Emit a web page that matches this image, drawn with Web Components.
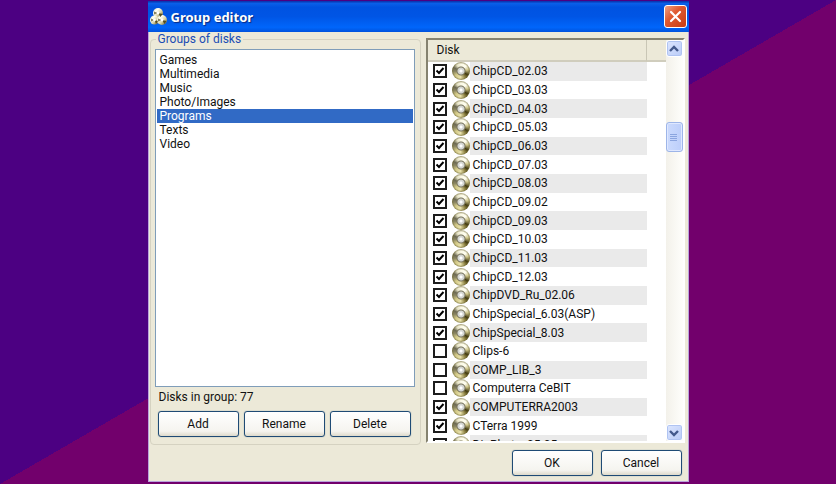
<!DOCTYPE html>
<html lang="en">
<head>
<meta charset="utf-8">
<meta name="viewport" content="width=device-width, initial-scale=1">
<title>Group editor</title>
<style>
    * {
        box-sizing: border-box;
    }

    body {
        margin: 0;
        height: 100vh;
        padding: 1px 0 2px;
        display: flex;
        justify-content: center;
        background: linear-gradient(to bottom right, #4c0082 50%, #72006c 50%);
        font: 12px/14px Roboto, "Liberation Sans", sans-serif;
        color: #111;
    }
</style>
</head>
<body>
<xp-window caption="Group editor">
    <group-box caption="Groups of disks">
        <group-list></group-list>
        <xp-button slot="actions">Add</xp-button>
        <xp-button slot="actions">Rename</xp-button>
        <xp-button slot="actions">Delete</xp-button>
    </group-box>
    <disk-list></disk-list>
    <xp-button slot="footer">OK</xp-button>
    <xp-button slot="footer">Cancel</xp-button>
</xp-window>

<script>
const groups = ["Games", "Multimedia", "Music", "Photo/Images", "Programs", "Texts", "Video"];

const disks = [
    ["ChipCD_02.03", true],
    ["ChipCD_03.03", true],
    ["ChipCD_04.03", true],
    ["ChipCD_05.03", true],
    ["ChipCD_06.03", true],
    ["ChipCD_07.03", true],
    ["ChipCD_08.03", true],
    ["ChipCD_09.02", true],
    ["ChipCD_09.03", true],
    ["ChipCD_10.03", true],
    ["ChipCD_11.03", true],
    ["ChipCD_12.03", true],
    ["ChipDVD_Ru_02.06", true],
    ["ChipSpecial_6.03(ASP)", true],
    ["ChipSpecial_8.03", true],
    ["Clips-6", false],
    ["COMP_LIB_3", false],
    ["Computerra CeBIT", false],
    ["COMPUTERRA2003", true],
    ["CTerra 1999", true],
    ["DigPhoto_05.05", false]
];

class DiskIcon extends HTMLElement {
    constructor() {
        super();
        this.attachShadow({mode: "open"}).innerHTML = `
            <style>
                :host {
                    display: block;
                    width: 18px;
                    height: 18px;
                    border-radius: 50%;
                    /* hole, hub ring, then the shine on the disc */
                    background:
                        radial-gradient(circle, #fff 0 1px, #d4d6d2 2px 3px, #77735c 4px, transparent 5px),
                        radial-gradient(circle, transparent 7px, #6c642fb0 9px),
                        conic-gradient(#fbf9e6, #fffef0 45deg, #cfc68a 80deg, #40390f 120deg, #8c8142 145deg, #e9e2ac 185deg, #d3c987 230deg, #8c8762 265deg, #6c6952 295deg, #e4e1c4 325deg, #fbf9e6);
                }
            </style>
        `;
    }
}

class XpButton extends HTMLElement {
    constructor() {
        super();
        this.attachShadow({mode: "open"}).innerHTML = `
            <style>
                :host { display: block; width: 81px; }
                button {
                    display: block;
                    width: 100%;
                    height: 26px;
                    padding: 0;
                    border: 1px solid #1f4b75;
                    border-radius: 3px;
                    background: linear-gradient(#fff, #f5f4ef 80%, #dedacb);
                    box-shadow: 0 0 1px #5f7c95;
                    font: inherit;
                    color: inherit;
                }
            </style>
            <button type="button"><slot></slot></button>
        `;
    }
}

class XpWindow extends HTMLElement {
    constructor() {
        super();
        this.attachShadow({mode: "open"});
    }

    connectedCallback() {
        this.shadowRoot.innerHTML = `
            <style>
                * { box-sizing: border-box; }
                :host {
                    box-sizing: border-box;
                    display: flex;
                    flex-direction: column;
                    width: 100%;
                    max-width: 541px;
                    border: 1px solid #b9a3dc;
                    border-top: 0;
                    background: #ece9d8;
                }
                header {
                    display: flex;
                    flex: none;
                    align-items: center;
                    gap: 4px;
                    height: 31px;
                    margin: 0 -1px;
                    padding: 0 2px;
                    background: linear-gradient(#0a2fa8, #0a5fe8 8%, #0053e1 20%, #0055e5 50%, #0066fb 85%, #0052dd);
                }
                header svg { display: block; flex: none; }
                h1 {
                    flex: 1;
                    margin: 0;
                    font: bold 13px/18px "Noto Sans", "Open Sans", sans-serif;
                    color: #fff;
                    text-shadow: 1px 1px 1px #0a2a80;
                }
                .close {
                    width: 23px;
                    height: 23px;
                    padding: 0;
                    border: 1px solid #fff;
                    border-radius: 3px;
                    background: linear-gradient(135deg, #f0a083, #e05a31 40%, #c93c12);
                }
                .close svg { margin: auto; }
                main {
                    flex: 1;
                    min-height: 0;
                    display: grid;
                    grid-template-columns: 271fr 259fr;
                    gap: 5px;
                    padding: 0 3px 0 1px;
                }
                footer {
                    flex: none;
                    display: flex;
                    justify-content: flex-end;
                    gap: 8px;
                    padding: 5px 6px 5px;
                }
            </style>
            <header>
                <svg width="17" height="18" viewBox="0 0 17 18" aria-hidden="true">
                    <defs>
                        <linearGradient id="shine" x1="0" y1="0" x2="1" y2="1">
                            <stop offset="0" stop-color="#d9d6bd"/>
                            <stop offset=".3" stop-color="#fffff4"/>
                            <stop offset=".6" stop-color="#d6cfa0"/>
                            <stop offset="1" stop-color="#4f481d"/>
                        </linearGradient>
                    </defs>
                    <g fill="url(#shine)">
                        <circle cx="8" cy="5" r="5"/>
                        <circle cx="4.500" cy="12" r="4.500"/>
                        <circle cx="12" cy="12" r="5"/>
                    </g>
                    <path d="M8 5L4 3.500v3zM4.500 12L1 10.500v3zM12 12l-4-1.500v3z" fill="#85805c"/>
                    <path d="M8 5l4.500 1-2 3zM4.500 12l3.500 1-2 3zM12 12l4.500 1-2 3z" fill="#544d21"/>
                    <g fill="#fff">
                        <circle cx="8" cy="5" r="1.400"/>
                        <circle cx="4.500" cy="12" r="1.400"/>
                        <circle cx="12" cy="12" r="1.400"/>
                    </g>
                </svg>
                <h1>${this.getAttribute("caption")}</h1>
                <button class="close" type="button" aria-label="Close">
                    <svg width="13" height="13" viewBox="0 0 13 13"><path d="M2 2l9 9M11 2l-9 9" stroke="#fff" stroke-width="2.200" stroke-linecap="round"/></svg>
                </button>
            </header>
            <main><slot></slot></main>
            <footer><slot name="footer"></slot></footer>
        `;
    }
}

class GroupBox extends HTMLElement {
    constructor() {
        super();
        this.attachShadow({mode: "open"});
    }

    connectedCallback() {
        this.shadowRoot.innerHTML = `
            <style>
                :host { display: flex; min-width: 0; min-height: 0; }
                fieldset {
                    box-sizing: border-box;
                    flex: 1;
                    min-width: 0;
                    margin: 0;
                    padding: 3px 5px 7px 4px;
                    border: 1px solid #d5d2c1;
                    border-radius: 4px;
                }
                legend {
                    margin-left: 1px;
                    padding: 0 2px;
                    color: #1a4cb4;
                }
                .content {
                    display: flex;
                    flex-direction: column;
                    height: 100%;
                }
                p { margin: 3px 4px 7px; }
                .actions {
                    display: flex;
                    justify-content: space-between;
                    padding: 0 4px 0 3px;
                }
            </style>
            <fieldset>
                <legend>${this.getAttribute("caption")}</legend>
                <div class="content">
                    <slot></slot>
                    <p>Disks in group: 77</p>
                    <div class="actions"><slot name="actions"></slot></div>
                </div>
            </fieldset>
        `;
    }
}

class GroupList extends HTMLElement {
    constructor() {
        super();
        this.attachShadow({mode: "open"});
    }

    connectedCallback() {
        this.shadowRoot.innerHTML = `
            <style>
                :host { display: flex; flex: 1; min-height: 0; }
                select {
                    flex: 1;
                    min-width: 0;
                    margin: 0;
                    padding: 3px 1px;
                    border: 1px solid #7f9db9;
                    border-radius: 0;
                    outline: 0;
                    background: #fff;
                    font: inherit;
                    color: inherit;
                    overflow: hidden;
                }
                option {
                    min-height: 14px;
                    padding: 0 3px;
                    line-height: 14px;
                }
                option:checked {
                    background: #316ac5 linear-gradient(#316ac5, #316ac5);
                    color: #fff;
                }
            </style>
            <select size="20" aria-label="Groups of disks">
                ${groups.map(name => `<option${name === "Programs" ? " selected" : ""}>${name}</option>`).join("")}
            </select>
        `;
    }
}

class XpScrollbar extends HTMLElement {
    constructor() {
        super();
        this.attachShadow({mode: "open"}).innerHTML = `
            <style>
                :host {
                    display: flex;
                    flex-direction: column;
                    width: 17px;
                    background: linear-gradient(90deg, #f3f1ea, #fefefb);
                }
                button {
                    display: grid;
                    place-items: center;
                    height: 17px;
                    padding: 0;
                    border: 1px solid #fff;
                    border-radius: 3px;
                    background: linear-gradient(135deg, #dce6ff, #b9cbf7);
                    box-shadow: inset 0 0 0 1px #b0c4f2;
                }
                .before { flex: 65; }
                .after { flex: 272; }
                .thumb {
                    display: grid;
                    place-content: center;
                    height: 30px;
                    box-sizing: border-box;
                    border: 1px solid #9db5e8;
                    border-radius: 3px;
                    background: linear-gradient(90deg, #cbdafd, #bccefa);
                    box-shadow: inset 0 0 0 1px #dfe8ff;
                }
            </style>
            <button type="button" aria-label="Scroll up">
                <svg width="10" height="8" viewBox="0 0 10 8"><path d="M1 6l4-4 4 4" fill="none" stroke="#43598c" stroke-width="2.400"/></svg>
            </button>
            <div class="before"></div>
            <div class="thumb">
                <svg width="8" height="9" viewBox="0 0 8 9"><path d="M0 1h7M0 3h7M0 5h7M0 7h7" transform="translate(0 .5)" stroke="#8ba5df"/></svg>
            </div>
            <div class="after"></div>
            <button type="button" aria-label="Scroll down">
                <svg width="10" height="8" viewBox="0 0 10 8"><path d="M1 2l4 4 4-4" fill="none" stroke="#43598c" stroke-width="2.400"/></svg>
            </button>
        `;
    }
}

class DiskList extends HTMLElement {
    constructor() {
        super();
        this.attachShadow({mode: "open"});
    }

    connectedCallback() {
        this.shadowRoot.innerHTML = `
            <style>
                * { box-sizing: border-box; }
                :host {
                    display: flex;
                    box-sizing: border-box;
                    min-width: 0;
                    min-height: 0;
                    margin-top: 6px;
                    margin-bottom: 2px;
                    border: 2px solid;
                    border-color: #85826f #fff #fff #85826f;
                    background: #fff;
                }
                .view {
                    flex: 1;
                    min-width: 0;
                    overflow: hidden;
                }
                /* 22px header, the rest is shared by the rows */
                table {
                    width: 100%;
                    height: 414px;
                    table-layout: fixed;
                    border-collapse: separate;
                    border-spacing: 0;
                }
                th, td { padding: 0; }
                th {
                    height: 22px;
                    padding: 0 0 0 9px;
                    border-bottom: 2px solid #d0cdbd;
                    background: #ece9d8;
                    font-weight: normal;
                    text-align: left;
                }
                th:first-child { border-right: 1px solid #c9c6b5; }
                .marks { width: 42px; }
                .end { width: 19px; }
                .marks div {
                    display: flex;
                    align-items: center;
                    gap: 5px;
                    height: 18px;
                    padding-left: 5px;
                }
                label {
                    display: block;
                    padding-left: 3px;
                    white-space: nowrap;
                }
                tr:nth-child(odd) .name { background: #eaeaea; }
                input {
                    appearance: none;
                    flex: none;
                    width: 14px;
                    height: 14px;
                    margin: 0;
                    border: 2px solid #1c1c1c;
                    background: #fff center / 10px 10px no-repeat;
                }
                input:checked {
                    background-image: url("data:image/svg+xml,%3Csvg xmlns='http://www.w3.org/2000/svg' viewBox='0 0 10 10'%3E%3Cpath d='M1.500 4.500l2.500 2.500 4.500-5' fill='none' stroke='%23000' stroke-width='2'/%3E%3C/svg%3E");
                }
            </style>
            <div class="view">
                <table>
                    <colgroup><col class="marks"><col><col class="end"></colgroup>
                    <thead><tr><th colspan="2">Disk</th><th></th></tr></thead>
                    <tbody>
                        ${disks.map(([name, checked], i) => `
                            <tr>
                                <td class="marks"><div><input type="checkbox" id="disk${i}"${checked ? " checked" : ""}><disk-icon></disk-icon></div></td>
                                <td class="name"><label for="disk${i}">${name}</label></td>
                                <td></td>
                            </tr>
                        `).join("")}
                    </tbody>
                </table>
            </div>
            <xp-scrollbar></xp-scrollbar>
        `;
    }
}

customElements.define("disk-icon", DiskIcon);
customElements.define("xp-button", XpButton);
customElements.define("xp-window", XpWindow);
customElements.define("group-box", GroupBox);
customElements.define("group-list", GroupList);
customElements.define("xp-scrollbar", XpScrollbar);
customElements.define("disk-list", DiskList);
</script>
</body>
</html>
